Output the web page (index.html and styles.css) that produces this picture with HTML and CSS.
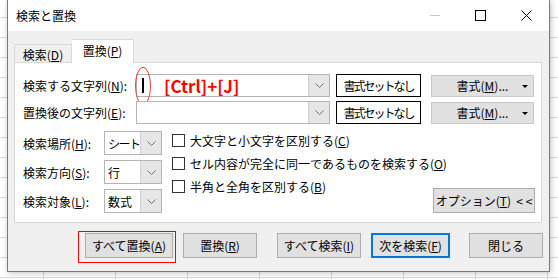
FILE: index.html
```html
<!DOCTYPE html>
<html lang="ja">
<head>
    <meta charset="UTF-8">
    <title>検索と置換</title>
    <link rel="stylesheet" href="styles.css">
</head>
<body>
    <div class="dialog">
        <div class="titlebar">
            <span class="title">検索と置換</span>
            <div class="winctl">
                <span class="min"></span>
                <span class="max"></span>
                <svg class="close" width="11" height="11" viewBox="0 0 11 11">
                    <path d="M0.5 0.5 L10.5 10.5 M10.5 0.5 L0.5 10.5" stroke="#000" stroke-width="1" fill="none"/>
                </svg>
            </div>
        </div>

        <div class="content">
            <div class="tabs">
                <div class="tab">検索(<u>D</u>)</div>
                <div class="tab active">置換(<u>P</u>)</div>
            </div>

            <div class="panel">
                <div class="text-row">
                    <span class="label">検索する文字列(<u>N</u>):</span>
                    <div class="combo wide marked">
                        <span class="field"><span class="caret"></span><span class="hint">[Ctrl]+[J]</span></span>
                        <span class="arrow"><svg width="9" height="5" viewBox="0 0 9 5"><path d="M0.5 0.5 L4.5 4.5 L8.5 0.5" stroke="#707070" fill="none"/></svg></span>
                    </div>
                    <button class="fmt-none">書式セットなし</button>
                    <button class="fmt">書式(<u>M</u>)...<span class="drop"></span></button>
                </div>
                <div class="text-row">
                    <span class="label">置換後の文字列(<u>E</u>):</span>
                    <div class="combo wide">
                        <span class="field"></span>
                        <span class="arrow"><svg width="9" height="5" viewBox="0 0 9 5"><path d="M0.5 0.5 L4.5 4.5 L8.5 0.5" stroke="#707070" fill="none"/></svg></span>
                    </div>
                    <button class="fmt-none">書式セットなし</button>
                    <button class="fmt">書式(<u>M</u>)...<span class="drop"></span></button>
                </div>

                <div class="options">
                    <div class="selects">
                        <div class="sel-row">
                            <span class="label short">検索場所(<u>H</u>):</span>
                            <div class="combo small">
                                <span class="field narrow">シート</span>
                                <span class="arrow"><svg width="9" height="5" viewBox="0 0 9 5"><path d="M0.5 0.5 L4.5 4.5 L8.5 0.5" stroke="#707070" fill="none"/></svg></span>
                            </div>
                        </div>
                        <div class="sel-row">
                            <span class="label short">検索方向(<u>S</u>):</span>
                            <div class="combo small">
                                <span class="field">行</span>
                                <span class="arrow"><svg width="9" height="5" viewBox="0 0 9 5"><path d="M0.5 0.5 L4.5 4.5 L8.5 0.5" stroke="#707070" fill="none"/></svg></span>
                            </div>
                        </div>
                        <div class="sel-row">
                            <span class="label short">検索対象(<u>L</u>):</span>
                            <div class="combo small">
                                <span class="field">数式</span>
                                <span class="arrow"><svg width="9" height="5" viewBox="0 0 9 5"><path d="M0.5 0.5 L4.5 4.5 L8.5 0.5" stroke="#707070" fill="none"/></svg></span>
                            </div>
                        </div>
                    </div>
                    <div class="checks-area">
                        <div class="checks">
                            <label class="check"><span class="box"></span>大文字と小文字を区別する(<u>C</u>)</label>
                            <label class="check"><span class="box"></span>セル内容が完全に同一であるものを検索する(<u>O</u>)</label>
                            <label class="check"><span class="box"></span>半角と全角を区別する(<u>B</u>)</label>
                        </div>
                        <button class="btn opt-btn">オプション(<u>T</u>)&nbsp;&nbsp;&lt;&nbsp;&lt;</button>
                    </div>
                </div>
            </div>

            <div class="actions">
                <button class="btn replace-all">すべて置換(<u>A</u>)</button>
                <button class="btn replace">置換(<u>R</u>)</button>
                <button class="btn find-all">すべて検索(<u>I</u>)</button>
                <button class="btn find-next">次を検索(<u>F</u>)</button>
                <button class="btn close-btn">閉じる</button>
            </div>
        </div>
    </div>
</body>
</html>
```

FILE: styles.css
```css
html, body {
    margin: 0;
    padding: 0;
}

body {
    width: 558px;
    height: 280px;
    overflow: hidden;
    font-family: "Noto Sans CJK JP", "Noto Sans", sans-serif;
    font-size: 12px;
    color: #000;
    background-color: #fff;
    background-image:
        linear-gradient(to right, #d9d9d9 1px, transparent 1px),
        linear-gradient(to bottom, #d9d9d9 1px, transparent 1px);
    background-size: 72px 20px;
    background-position: 43px 17px;
}

u {
    text-decoration: underline;
    text-underline-offset: 1px;
}

.dialog {
    margin-left: 7px;
    width: 543px;
    height: 272px;
    box-sizing: border-box;
    border: 1px solid #7a7a7a;
    border-top: none;
    background: #f0f0f0;
    display: flex;
    flex-direction: column;
    box-shadow: 1px 1px 6px rgba(0, 0, 0, 0.25);
}

/* title bar */

.titlebar {
    height: 31px;
    background: #fff;
    display: flex;
    align-items: center;
    padding: 0 17px 0 8px;
}

.title {
    line-height: 1;
}

.winctl {
    margin-left: auto;
    display: flex;
    align-items: center;
}

.min {
    width: 10px;
    height: 1px;
    background: #c4c4c4;
    margin-right: 35px;
}

.max {
    width: 9px;
    height: 9px;
    border: 1px solid #000;
    margin-right: 35px;
}

.close {
    display: block;
}

/* body */

.content {
    flex: 1;
    padding: 8px 6px 8px 6px;
    display: flex;
    flex-direction: column;
}

.tabs {
    display: flex;
    align-items: flex-end;
    height: 24px;
    margin-bottom: -1px;
    position: relative;
    z-index: 1;
}

.tab {
    height: 19px;
    width: 58px;
    box-sizing: border-box;
    border: 1px solid #d9d9d9;
    border-bottom: none;
    text-align: center;
    line-height: 19px;
}

.tab.active {
    height: 24px;
    width: 62px;
    background: #fff;
    line-height: 22px;
    border-left: none;
}

.panel {
    background: #fff;
    border: 1px solid #d9d9d9;
    margin-right: 1px;
    padding: 11px 6px 9px 8px;
}

.text-row {
    display: flex;
    align-items: center;
    height: 23px;
    margin-bottom: 4px;
}

.label {
    width: 113px;
    flex: none;
    white-space: nowrap;
}

.label.short {
    width: 81px;
}

.combo {
    display: flex;
    box-sizing: border-box;
    border: 1px solid #b4b4b4;
    background: #fff;
    position: relative;
}

.combo.wide {
    width: 194px;
    height: 23px;
}

.combo.small {
    width: 58px;
    height: 24px;
}

.field {
    flex: 1;
    display: flex;
    align-items: center;
    padding-left: 3px;
    white-space: nowrap;
}

.field.narrow {
    letter-spacing: -1.5px;
}

.arrow {
    width: 20px;
    flex: none;
    background: #e6e6e6;
    border-left: 1px solid #d0d0d0;
    display: flex;
    align-items: center;
    justify-content: center;
}

.arrow svg {
    display: block;
}

.caret {
    width: 2px;
    height: 15px;
    background: #000;
    margin-left: 2px;
}

.hint {
    margin-left: 20px;
    color: #f00;
    font-weight: bold;
    font-size: 17px;
    line-height: 20px;
}

.marked::after {
    content: "";
    position: absolute;
    left: -2px;
    top: -8px;
    width: 14px;
    height: 36px;
    border: 1px solid #f23a3a;
    border-radius: 50%;
}

button {
    font-family: inherit;
    font-size: 12px;
    color: #000;
    padding: 0;
    margin: 0;
    white-space: nowrap;
}

.fmt-none {
    width: 85px;
    height: 23px;
    margin-left: 6px;
    background: #fff;
    border: 1px solid #000;
    letter-spacing: -2px;
}

.fmt {
    width: 103px;
    height: 22px;
    margin-left: 10px;
    background: #e1e1e1;
    border: 1px solid #c8c8c8;
    position: relative;
}

.drop {
    position: absolute;
    right: 5px;
    top: 9px;
    border-left: 3px solid transparent;
    border-right: 3px solid transparent;
    border-top: 3px solid #000;
}

/* options */

.options {
    display: flex;
    margin-top: 7px;
}

.selects {
    display: flex;
    flex-direction: column;
    gap: 5px;
}

.sel-row {
    display: flex;
    align-items: center;
}

.checks-area {
    flex: 1;
    margin-left: 10px;
    display: grid;
}

.checks {
    grid-area: 1 / 1;
    display: flex;
    flex-direction: column;
    gap: 6px;
    padding-top: 1px;
}

.check {
    display: flex;
    align-items: center;
    height: 17px;
    white-space: nowrap;
}

.box {
    width: 11px;
    height: 11px;
    border: 1px solid #333;
    background: #fff;
    margin-right: 5px;
}

.btn {
    height: 25px;
    background: #e1e1e1;
    border: 1px solid #adadad;
}

.opt-btn {
    grid-area: 1 / 1;
    align-self: end;
    justify-self: end;
    width: 102px;
}

/* bottom buttons */

.actions {
    display: flex;
    margin-top: 10px;
    padding-left: 71px;
}

.replace-all {
    width: 88px;
    position: relative;
}

.replace-all::after {
    content: "";
    position: absolute;
    left: -8px;
    right: -4px;
    top: -3px;
    bottom: -6px;
    border: 1px solid #f00;
}

.replace {
    width: 74px;
    margin-left: 10px;
}

.find-all {
    width: 84px;
    margin-left: 20px;
}

.find-next {
    width: 79px;
    margin-left: 10px;
    border: 2px solid #0078d7;
}

.close-btn {
    width: 74px;
    margin-left: 19px;
}
```
